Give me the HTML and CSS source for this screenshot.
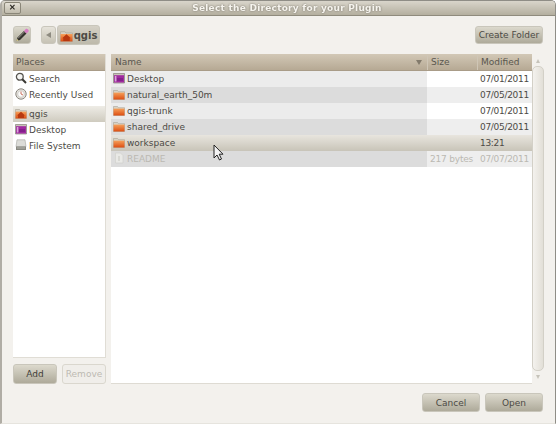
FILE: index.html
```html
<!DOCTYPE html>
<html lang="en">
<head>
  <meta charset="UTF-8" />
  <title>Select the Directory for your Plugin</title>
  <link rel="stylesheet" href="styles.css">
</head>
<body>
  <svg class="defs" width="0" height="0">
    <symbol id="folder" viewBox="0 0 12 12">
      <path d="M.5 2.500h4l1 1.200h6v7.800H.5z" fill="#d8d2c4" stroke="#a9a395" stroke-width=".6"/>
      <path d="M.5 4.600h11v6.900H.5z" fill="url(#orange)"/>
    </symbol>
    <symbol id="home" viewBox="0 0 12 12">
      <path d="M.5 2.500h4l1 1.200h6v7.800H.5z" fill="#d8d2c4" stroke="#a9a395" stroke-width=".6"/>
      <path d="M.5 4.600h11v6.900H.5z" fill="url(#orange)"/>
      <path d="M6 4.800 10 8.600H9v2.400H3V8.600H2z" fill="#b8380f"/>
    </symbol>
    <symbol id="desk" viewBox="0 0 12 12">
      <path d="M.5 1.500h11v9.500H.5z" fill="#c9c4b8" stroke="#77706a" stroke-width=".6"/>
      <path d="M1 3.200h10V10.500H1z" fill="#a02aa0"/>
      <path d="M1.800 4h1.600v5.500H1.800z" fill="#d9a6d9"/>
      <path d="M4 6h6v3H4z" fill="#84208c"/>
    </symbol>
    <symbol id="search" viewBox="0 0 12 12">
      <circle cx="4.800" cy="4.800" r="3.400" fill="#f4f4f2" stroke="#55534e" stroke-width="1.300"/>
      <path d="M7.300 7.300 11 11" stroke="#3a3833" stroke-width="2"/>
    </symbol>
    <symbol id="clock" viewBox="0 0 12 12">
      <circle cx="6" cy="6" r="5.200" fill="#e6e4df" stroke="#8a867e" stroke-width="1"/>
      <circle cx="6" cy="6" r="3.300" fill="#fbfbfa" stroke="#b0aca4" stroke-width=".5"/>
      <path d="M6 3.500V6l2 1" stroke="#c0503a" stroke-width=".8" fill="none"/>
    </symbol>
    <symbol id="disk" viewBox="0 0 12 12">
      <path d="M2 .8h8l1 6.700H1z" fill="#dcdcd8" stroke="#a5a59f" stroke-width=".6"/>
      <path d="M1 7.500h10v3.500H1z" fill="#8a8a82"/>
      <path d="M2 8.500h8v1H2z" fill="#b5b5ae"/>
    </symbol>
    <symbol id="file" viewBox="0 0 12 12">
      <path d="M2.500 1h5l2.500 2.500V11H2.500z" fill="#e9e9e6" stroke="#cfcfca" stroke-width=".6"/>
      <path d="M6 4v5" stroke="#d0d0cb" stroke-width="1.500"/>
    </symbol>
    <symbol id="pencil" viewBox="0 0 16 16">
      <path d="M2.500 14 3.500 10.500 10 4 12.500 6.500 6 13z" fill="#35332e"/>
      <path d="M3.500 10.500 10 4 11 5 4.500 11.500z" fill="#77746c"/>
      <path d="M10 4 11.500 2.200C12.300 1.500 13.300 1.700 14 2.400S15 4 14.300 4.800L12.500 6.500z" fill="#d87cc4"/>
      <path d="M2.500 14l.6-2 1.500 1.400z" fill="#f2e59a"/>
    </symbol>
    <defs>
      <linearGradient id="orange" x1="0" y1="0" x2="0" y2="1">
        <stop offset="0" stop-color="#f6a05a"/>
        <stop offset="1" stop-color="#dc4d12"/>
      </linearGradient>
    </defs>
  </svg>

  <div class="window">
    <div class="titlebar">
      <button class="close">✕</button>
      <div class="title">Select the Directory for your Plugin</div>
    </div>

    <div class="content">
      <div class="toolbar">
        <button class="btn edit"><svg width="16" height="16"><use href="#pencil"/></svg></button>
        <div class="path">
          <button class="btn back"><span class="arrow-left"></span></button>
          <button class="btn crumb"><svg width="13" height="13"><use href="#home"/></svg>qgis</button>
        </div>
        <button class="btn create">Create Folder</button>
      </div>

      <div class="panes">
        <div class="left">
          <div class="places">
            <div class="head">Places</div>
            <div class="row place"><svg width="12" height="12"><use href="#search"/></svg>Search</div>
            <div class="row place"><svg width="12" height="12"><use href="#clock"/></svg>Recently Used</div>
            <div class="sep"></div>
            <div class="row place current"><svg width="12" height="12"><use href="#home"/></svg>qgis</div>
            <div class="row place"><svg width="12" height="12"><use href="#desk"/></svg>Desktop</div>
            <div class="row place"><svg width="12" height="12"><use href="#disk"/></svg>File System</div>
          </div>
          <div class="left-btns">
            <button class="btn add">Add</button>
            <button class="btn remove">Remove</button>
          </div>
        </div>

        <div class="files">
          <div class="list">
            <div class="head cols">
              <div class="c-name">Name<span class="sort"></span></div>
              <div class="c-size">Size</div>
              <div class="c-date">Modified</div>
            </div>
            <div class="row cols odd">
              <div class="c-name"><svg width="12" height="12"><use href="#desk"/></svg>Desktop</div>
              <div class="c-size"></div>
              <div class="c-date">07/01/2011</div>
            </div>
            <div class="row cols even">
              <div class="c-name"><svg width="12" height="12"><use href="#folder"/></svg>natural_earth_50m</div>
              <div class="c-size"></div>
              <div class="c-date">07/05/2011</div>
            </div>
            <div class="row cols odd">
              <div class="c-name"><svg width="12" height="12"><use href="#folder"/></svg>qgis-trunk</div>
              <div class="c-size"></div>
              <div class="c-date">07/01/2011</div>
            </div>
            <div class="row cols even">
              <div class="c-name"><svg width="12" height="12"><use href="#folder"/></svg>shared_drive</div>
              <div class="c-size"></div>
              <div class="c-date">07/05/2011</div>
            </div>
            <div class="row cols selected">
              <div class="c-name"><svg width="12" height="12"><use href="#folder"/></svg>workspace</div>
              <div class="c-size"></div>
              <div class="c-date">13:21</div>
            </div>
            <div class="row cols even dim">
              <div class="c-name"><svg width="12" height="12"><use href="#file"/></svg>README</div>
              <div class="c-size">217 bytes</div>
              <div class="c-date">07/07/2011</div>
            </div>
          </div>
          <div class="scroll">
            <span class="arrow-up"></span>
            <div class="thumb"></div>
            <span class="arrow-down"></span>
          </div>
        </div>
      </div>

      <div class="actions">
        <button class="btn action">Cancel</button>
        <button class="btn action">Open</button>
      </div>
    </div>

    <svg class="cursor" width="12" height="18" viewBox="0 0 12 18">
      <path d="M1 1v13l3-3 2.500 5 2-1-2.300-4.800H10z" fill="#f4f4f4" stroke="#222" stroke-width="1"/>
    </svg>
  </div>
</body>
</html>
```

FILE: styles.css
```css
html, body {
  margin: 0;
  height: 100%;
  background: #fff;
  overflow: hidden;
}

body {
  font-family: 'DejaVu Sans', sans-serif;
  font-size: 9px;
  color: #4c4a45;
}

.defs {
  position: absolute;
}

.window {
  position: relative;
  width: 556px;
  height: 424px;
  background: #f3f1ed;
  border-radius: 5px 5px 0 0;
  border: 1px solid #8f8d86;
  border-left: 2px solid #b0ada5;
  border-bottom: 1px solid #e6e4de;
  box-sizing: border-box;
  filter: blur(0.5px);
}

.titlebar {
  height: 15px;
  position: relative;
  background: linear-gradient(#d9d5cb, #b4af9f);
  border-bottom: 1px solid #8f8b7d;
  border-radius: 4px 4px 0 0;
  box-sizing: border-box;
  display: flex;
  align-items: center;
  justify-content: center;
}

.title {
  font-weight: bold;
  font-size: 9px;
  color: #f6f4ee;
  text-shadow: 0 0 2px #6c685f;
  letter-spacing: 0.25px;
  padding-left: 17px;
}

.close {
  position: absolute;
  left: 2px;
  top: 1px;
  width: 17px;
  height: 12px;
  padding: 0;
  font-size: 8px;
  line-height: 10px;
  font-weight: bold;
  color: #2a2823;
  background: linear-gradient(#e4e0d6, #c0bbac);
  border: 1px solid #8a8678;
  border-radius: 2px;
}

.content {
  padding: 9px 11px 0 11px;
  display: flex;
  flex-direction: column;
}

.btn {
  font-family: inherit;
  font-size: 9px;
  color: #4c4a45;
  padding: 0;
  border: 1px solid #c9c6bb;
  border-radius: 3px;
  background: linear-gradient(#dcd9cd, #aeaa9a);
  display: flex;
  align-items: center;
  justify-content: center;
}

.toolbar {
  display: flex;
  align-items: center;
  height: 20px;
  padding-right: 1px;
}

.edit {
  width: 18px;
  height: 18px;
}

.path {
  display: flex;
  margin-left: 10px;
  align-items: center;
}

.back {
  width: 15px;
  height: 18px;
  background: linear-gradient(#e6e3da, #c6c2b4);
}

.arrow-left {
  width: 0;
  height: 0;
  border: 3.5px solid transparent;
  border-left: 0;
  border-right: 5px solid #8e8b80;
}

.crumb {
  width: 43px;
  height: 20px;
  margin-left: 1px;
  gap: 1px;
  font-size: 10px;
  font-weight: bold;
  background: linear-gradient(#d5d1c6, #bdb9aa);
}

.create {
  width: 68px;
  height: 18px;
  margin-left: auto;
}

.panes {
  display: flex;
  gap: 5px;
  margin-top: 9px;
  height: 330px;
}

.left {
  width: 93px;
  display: flex;
  flex-direction: column;
}

.places {
  flex: 1;
  background: #fff;
  border: 1px solid #e0ddd5;
  border-top: 0;
  border-left: 0;
}

.head {
  height: 17px;
  line-height: 17px;
  background: linear-gradient(#d2c8b6, #b6a994);
  border-bottom: 1px solid #a99c88;
  box-sizing: border-box;
  padding-left: 3px;
  color: #5a574f;
}

.row {
  height: 16px;
  line-height: 16px;
  white-space: nowrap;
}

.row svg {
  vertical-align: -2px;
}

.place {
  padding-left: 2px;
}

.place svg {
  margin-right: 2px;
}

.sep {
  height: 3px;
}

.current {
  background: linear-gradient(#eeece6, #cfcbbf);
}

.left-btns {
  display: flex;
  justify-content: space-between;
  margin-top: 6px;
  height: 20px;
}

.add {
  width: 44px;
  color: #3f3d38;
}

.remove {
  width: 44px;
  color: #bdbab2;
  background: #f0eeea;
  border-color: #dad7ce;
}

.files {
  flex: 1;
  display: flex;
}

.list {
  width: 421px;
  background: #fff;
  border-bottom: 1px solid #dedbd3;
  box-sizing: border-box;
}

.cols {
  display: flex;
  padding-left: 0;
}

.head.cols > div + div {
  border-left: 1px solid #cfc6b6;
}

.c-name {
  width: 316px;
  box-sizing: border-box;
  padding-left: 2px;
  position: relative;
}

.c-name svg {
  margin-right: 2px;
}

.c-size {
  width: 50px;
  box-sizing: border-box;
  padding-left: 3px;
  letter-spacing: -0.2px;
}

.c-date {
  width: 55px;
  box-sizing: border-box;
  padding-left: 3px;
  letter-spacing: -0.3px;
}

.head .c-size,
.head .c-date {
  letter-spacing: 0;
}

.head .c-name {
  padding-left: 4px;
}

.sort {
  position: absolute;
  right: 5px;
  top: 6px;
  border: 3px solid transparent;
  border-bottom: 0;
  border-top: 5px solid #837b6c;
}

.odd .c-name {
  background: #ececec;
}

.even .c-name {
  background: #dcdcdc;
}

.even .c-size,
.even .c-date {
  background: #eeeeee;
}

.selected {
  background: linear-gradient(#e8e5de, #c8c4b8);
}

.dim {
  color: #bbb9b2;
}

.scroll {
  width: 12px;
  display: flex;
  flex-direction: column;
  align-items: center;
}

.arrow-up,
.arrow-down {
  width: 0;
  height: 0;
  border: 2.5px solid transparent;
}

.arrow-up {
  border-top: 0;
  border-bottom: 4px solid #c6c3ba;
  margin-top: 5px;
}

.arrow-down {
  border-bottom: 0;
  border-top: 4px solid #c6c3ba;
  margin-top: 4px;
  margin-bottom: 5px;
}

.thumb {
  width: 10px;
  flex: 1;
  margin-top: 3px;
  border: 1px solid #d3d0c7;
  border-radius: 5px;
  background: linear-gradient(90deg, #f4f2ee, #e2dfd7);
}

.actions {
  display: flex;
  justify-content: flex-end;
  gap: 5px;
  margin-top: 9px;
  padding-right: 1px;
}

.action {
  width: 58px;
  height: 19px;
}

.cursor {
  position: absolute;
  left: 211px;
  top: 143px;
}
```
